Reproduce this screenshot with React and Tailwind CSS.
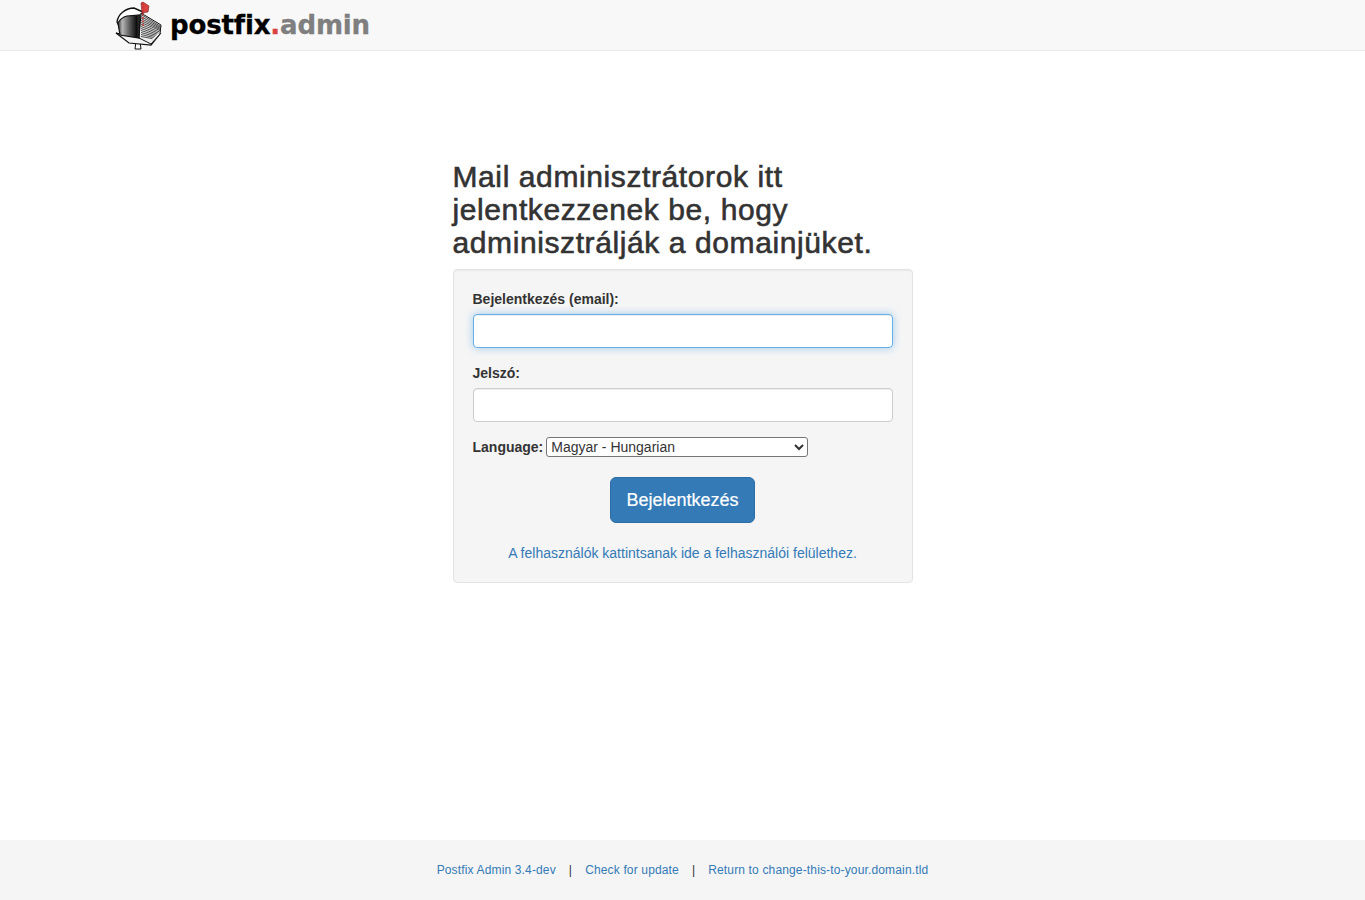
const ribs = [0, 1, 2, 3, 4, 5, 6, 7, 8, 9, 10, 11];

const MailboxLogo = () => (
    <svg width="48" height="50" viewBox="0 0 48 50" className="shrink-0">
        <defs>
            <linearGradient id="door" x1="0" y1="0" x2="1" y2="0">
                <stop offset="0" stopColor="#3a3a3a" />
                <stop offset="0.2" stopColor="#b5b5b5" />
                <stop offset="0.55" stopColor="#555" />
                <stop offset="0.85" stopColor="#0c0c0c" />
                <stop offset="1" stopColor="#444" />
            </linearGradient>
        </defs>
        {/* post */}
        <path d="M22 41 L21 49 L27 49 L26 42 Z" fill="#fff" stroke="#111" strokeWidth="1" />
        {/* base plate */}
        <path d="M2 33 L15 43 L37 45 L46 34 L26 38 Z" fill="#f4f4f4" stroke="#111" strokeWidth="1.2" />
        {/* arch */}
        <path d="M3 22 C4 14 12 8 20 8 L29 12 L27 22 L6 28 Z" fill="#fff" stroke="#111" strokeWidth="1.4" />
        {/* ribbed side */}
        <path d="M27 13 L47 25 L46 34 L37 44 L25 38 Z" fill="#eee" stroke="#111" strokeWidth="1" />
        {ribs.map((i) => (
            <path key={i} d={`M27 ${14.5 + i * 2} L${46.8 - (i > 4 ? (i - 4) * 1.2 : 0)} ${26.5 + i * 1.1}`} stroke="#222" strokeWidth="0.8" fill="none" />
        ))}
        {/* door */}
        <path d="M4 23 C6 19 9 17 13 16 L26 15 L25 38 L6 35 Z" fill="url(#door)" stroke="#111" strokeWidth="1.2" />
        {/* flag */}
        <path d="M27 3 L29 2 L35 6 L34 12 L28 13 Z" fill="#d9423f" stroke="#7a1f1f" strokeWidth="0.6" />
        <path d="M29 3 L29 26" stroke="#c8322f" strokeWidth="1.4" strokeDasharray="2 1.5" />
    </svg>
);

export default function App() {
    return (
        <div className="min-h-[900px] flex flex-col bg-white text-[14px] text-[#333] font-['Liberation_Sans',Arial,sans-serif]">
            {/* Navbar */}
            <nav className="h-[51px] bg-[#f8f8f8] border-b border-[#e7e7e7] pl-[114px] flex items-center">
                <MailboxLogo />
                <span className="ml-2 text-[26px] leading-[50px] font-bold tracking-[-0.15px] [-webkit-text-stroke:0.3px] font-['DejaVu_Sans',sans-serif] text-black">
                    postfix<span className="text-[#d9423f]">.</span><span className="text-[#7f7f7f]">admin</span>
                </span>
            </nav>

            {/* Login */}
            <main className="w-[460px] mx-auto pt-[109px]">
                <h2 className="text-[30px] leading-[33px] font-normal tracking-[0.6px] [-webkit-text-stroke:0.6px_#333] mb-2.5">
                    Mail adminisztrátorok itt jelentkezzenek be, hogy adminisztrálják a domainjüket.
                </h2>
                <form className="h-[314px] bg-[#f5f5f5] border border-[#e3e3e3] rounded p-[19px] shadow-[inset_0_1px_1px_rgba(0,0,0,0.05)]">
                    <label className="block font-bold leading-5 mb-[5px]">Bejelentkezés (email):</label>
                    <input
                        type="text"
                        className="block w-full h-[34px] bg-white border border-[#66afe9] rounded outline-none shadow-[inset_0_1px_1px_rgba(0,0,0,0.075),0_0_8px_rgba(102,175,233,0.6)] mb-[15px]"
                    />
                    <label className="block font-bold leading-5 mb-[5px]">Jelszó:</label>
                    <input
                        type="password"
                        className="block w-full h-[34px] bg-white border border-[#ccc] rounded outline-none shadow-[inset_0_1px_1px_rgba(0,0,0,0.075)] mb-[15px]"
                    />
                    <div className="flex items-center h-5 mb-5">
                        <label className="font-bold leading-5 mr-[3px]">Language:</label>
                        <select className="w-[262px] h-5 bg-white border border-[#767676] rounded-[3px] text-[14px] text-[#333] appearance-auto">
                            <option>Magyar - Hungarian</option>
                        </select>
                    </div>
                    <div className="flex justify-center">
                        <button
                            type="button"
                            className="w-[145px] h-[46px] bg-[#337ab7] border border-[#2e6da4] rounded-md text-white text-[18px] leading-[24px] [-webkit-text-stroke:0.2px_#fff]"
                        >
                            Bejelentkezés
                        </button>
                    </div>
                    <div className="text-center mt-5 leading-5">
                        <a href="#" className="text-[#337ab7]">A felhasználók kattintsanak ide a felhasználói felülethez.</a>
                    </div>
                </form>
            </main>

            {/* Footer */}
            <footer className="mt-auto h-[60px] bg-[#f5f5f5] flex items-center justify-center text-[12px] tracking-[0.15px]">
                <a href="#" className="text-[#337ab7]">Postfix Admin 3.4-dev</a>
                <span className="mx-[13px]">|</span>
                <a href="#" className="text-[#337ab7]">Check for update</a>
                <span className="mx-[13px]">|</span>
                <a href="#" className="text-[#337ab7]">Return to change-this-to-your.domain.tld</a>
            </footer>
        </div>
    );
}
